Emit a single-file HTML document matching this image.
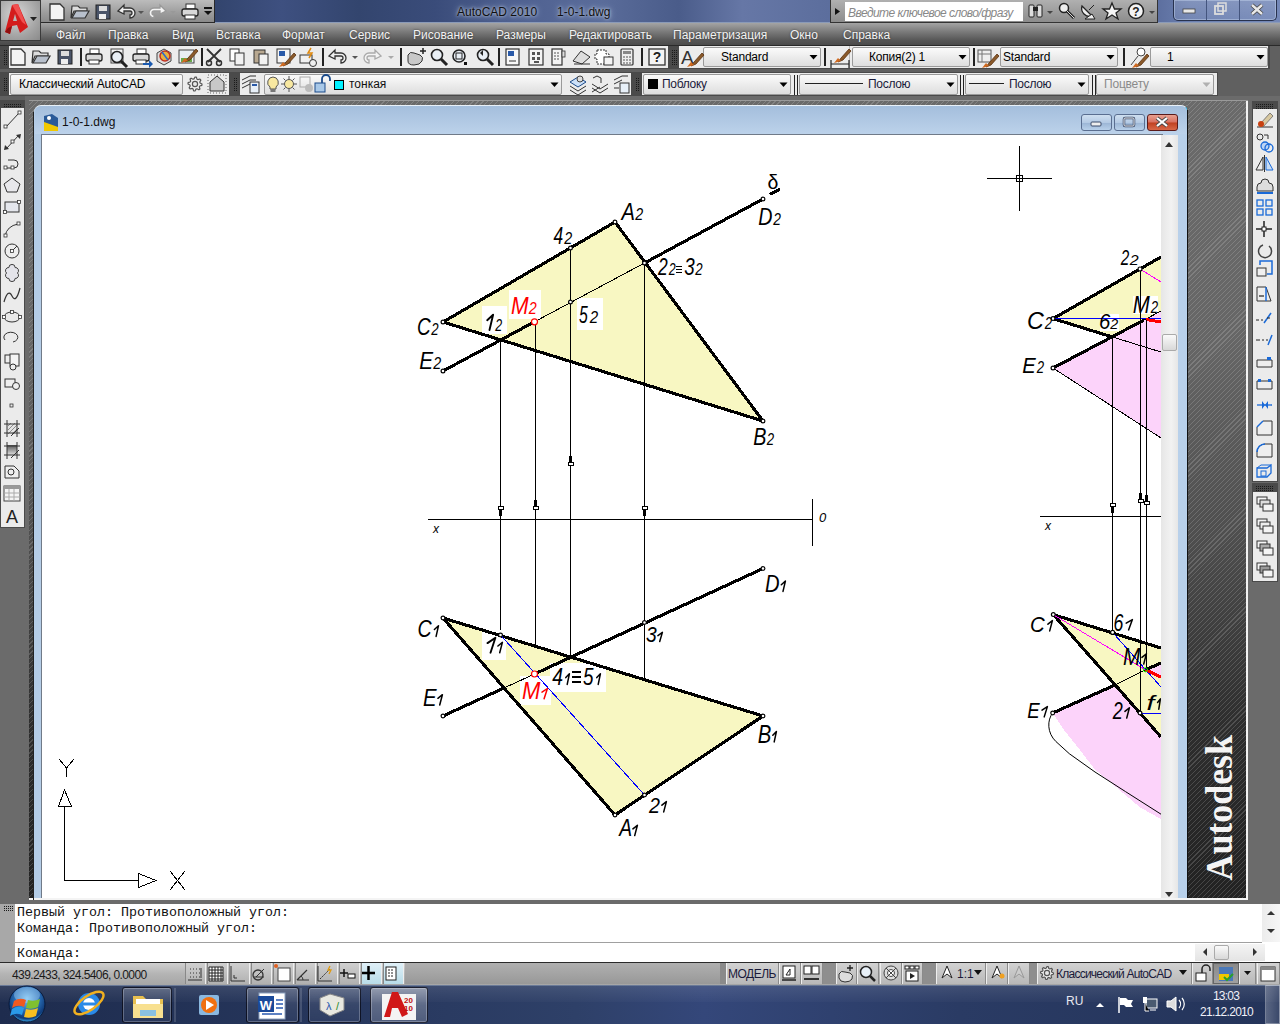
<!DOCTYPE html>
<html><head><meta charset="utf-8">
<style>
*{margin:0;padding:0;box-sizing:border-box}
html,body{width:1280px;height:1024px;overflow:hidden;background:#6b6b6b;font-family:"Liberation Sans",sans-serif}
.a{position:absolute}
.t{white-space:nowrap;line-height:1}
.mono{font-family:"Liberation Mono",monospace}
</style></head><body>
<div class="a" style="left:0px;top:0px;width:1280px;height:23px;background:linear-gradient(90deg,#34466f 0%,#33456e 17%,#3e5080 22%,#33456e 28%,#3a4c7a 34%,#4e6090 40%,#5a6c9a 47%,#4a5c8a 53%,#6677a6 58%,#5d6f9e 64%,#4a5c8c 80%,#5a6c9c 90%,#6c80b0 93%,#7488b8 100%)"></div>
<div class="a" style="left:0px;top:22px;width:1280px;height:1px;background:#8a9ab8"></div>
<div class="a t" style="left:457px;top:6px;font-size:12px;color:#101010;text-shadow:0 0 6px #b8c8e0,0 0 3px #c8d4e8">AutoCAD 2010&nbsp;&nbsp;&nbsp;&nbsp;&nbsp;&nbsp;1-0-1.dwg</div>
<div class="a" style="left:830px;top:0px;width:328px;height:23px;background:linear-gradient(#b0b0b0,#8c8c8c);border:1px solid #333;border-top:0"></div>
<div class="a" style="left:845px;top:2px;width:178px;height:19px;background:#fff"></div>
<div class="a t" style="left:848px;top:7px;font-size:12px;color:#888;font-style:italic;letter-spacing:-0.55px">Введите ключевое слово/фразу</div>
<div class="a" style="left:1173px;top:0px;width:104px;height:21px;background:linear-gradient(rgba(255,255,255,0.15),rgba(255,255,255,0.05));border:1px solid #28324e;border-top:0;border-radius:0 0 5px 5px;box-shadow:inset 0 0 0 1px rgba(200,215,240,0.45)"></div>
<div class="a" style="left:1206px;top:0px;width:1px;height:20px;background:#44557e"></div>
<div class="a" style="left:1239px;top:0px;width:1px;height:20px;background:#44557e"></div>
<div class="a" style="left:41px;top:0px;width:174px;height:23px;background:linear-gradient(#bcbcbc,#9c9c9c 60%,#8a8a8a);border-bottom:1px solid #2a2a2a;border-right:1px solid #2a2a2a"></div>
<div class="a" style="left:0px;top:23px;width:1280px;height:22px;background:linear-gradient(#a4a4a4,#7a7a7a 40%,#555 80%,#4a4a4a)"></div>
<div class="a t" style="left:56px;top:29px;font-size:12px;color:#f2f2f2;text-shadow:0 0 2px #333">Файл</div>
<div class="a t" style="left:108px;top:29px;font-size:12px;color:#f2f2f2;text-shadow:0 0 2px #333">Правка</div>
<div class="a t" style="left:172px;top:29px;font-size:12px;color:#f2f2f2;text-shadow:0 0 2px #333">Вид</div>
<div class="a t" style="left:216px;top:29px;font-size:12px;color:#f2f2f2;text-shadow:0 0 2px #333">Вставка</div>
<div class="a t" style="left:282px;top:29px;font-size:12px;color:#f2f2f2;text-shadow:0 0 2px #333">Формат</div>
<div class="a t" style="left:349px;top:29px;font-size:12px;color:#f2f2f2;text-shadow:0 0 2px #333">Сервис</div>
<div class="a t" style="left:413px;top:29px;font-size:12px;color:#f2f2f2;text-shadow:0 0 2px #333">Рисование</div>
<div class="a t" style="left:496px;top:29px;font-size:12px;color:#f2f2f2;text-shadow:0 0 2px #333">Размеры</div>
<div class="a t" style="left:569px;top:29px;font-size:12px;color:#f2f2f2;text-shadow:0 0 2px #333">Редактировать</div>
<div class="a t" style="left:673px;top:29px;font-size:12px;color:#f2f2f2;text-shadow:0 0 2px #333">Параметризация</div>
<div class="a t" style="left:790px;top:29px;font-size:12px;color:#f2f2f2;text-shadow:0 0 2px #333">Окно</div>
<div class="a t" style="left:843px;top:29px;font-size:12px;color:#f2f2f2;text-shadow:0 0 2px #333">Справка</div>
<div class="a" style="left:0px;top:0px;width:41px;height:41px;background:radial-gradient(circle at 40% 35%,#d8d8d8,#a6a6a6 60%,#8a8a8a);border:1px solid #3a3a3a"></div>
<div class="a" style="left:0px;top:45px;width:1280px;height:55px;background:#606060"></div>
<div class="a" style="left:0px;top:45px;width:1280px;height:1px;background:#2a2a2a"></div>
<div class="a" style="left:0px;top:46px;width:670px;height:23px;background:#4a4a4a"></div>
<div class="a" style="left:9px;top:46px;width:660px;height:22px;background:#ececec"></div>
<div class="a" style="left:668px;top:46px;width:602px;height:23px;background:#4a4a4a"></div>
<div class="a" style="left:679px;top:46px;width:589px;height:22px;background:#ececec"></div>
<div class="a" style="left:0px;top:72px;width:1218px;height:24px;background:#4a4a4a"></div>
<div class="a" style="left:9px;top:73px;width:1208px;height:22px;background:#ececec"></div>
<div class="a" style="left:703px;top:47px;width:118px;height:20px;background:linear-gradient(#fbfbfb,#ececec 50%,#dedede);border:1px solid #9a9a9a;border-radius:2px"></div>
<div class="a t" style="left:721px;top:51px;font-size:12px;color:#000;letter-spacing:-0.2px">Standard</div>
<div class="a" style="left:849px;top:46px;width:1px;height:22px;background:#bbb"></div>
<div class="a" style="left:852px;top:47px;width:118px;height:20px;background:linear-gradient(#fbfbfb,#ececec 50%,#dedede);border:1px solid #9a9a9a;border-radius:2px"></div>
<div class="a t" style="left:869px;top:51px;font-size:12px;color:#000;letter-spacing:-0.2px">Копия(2) 1</div>
<div class="a" style="left:1000px;top:47px;width:118px;height:20px;background:linear-gradient(#fbfbfb,#ececec 50%,#dedede);border:1px solid #9a9a9a;border-radius:2px"></div>
<div class="a t" style="left:1003px;top:51px;font-size:12px;color:#000;letter-spacing:-0.2px">Standard</div>
<div class="a" style="left:1150px;top:47px;width:118px;height:20px;background:linear-gradient(#fbfbfb,#ececec 50%,#dedede);border:1px solid #9a9a9a;border-radius:2px"></div>
<div class="a t" style="left:1167px;top:51px;font-size:12px;color:#000;letter-spacing:-0.2px">1</div>
<div class="a" style="left:10px;top:74px;width:173px;height:21px;background:linear-gradient(#fbfbfb,#ececec 50%,#dedede);border:1px solid #9a9a9a;border-radius:2px"></div>
<div class="a t" style="left:19px;top:78px;font-size:12px;color:#000;letter-spacing:-0.2px">Классический AutoCAD</div>
<div class="a" style="left:229px;top:72px;width:11px;height:24px;background:#4a4a4a"></div>
<div class="a" style="left:264px;top:74px;width:298px;height:21px;background:linear-gradient(#fbfbfb,#ececec 50%,#dedede);border:1px solid #9a9a9a;border-radius:2px"></div>
<div class="a" style="left:334px;top:80px;width:10px;height:10px;background:#00f0ff;border:1px solid #000"></div>
<div class="a t" style="left:349px;top:78px;font-size:12px;color:#111;">тонкая</div>
<div class="a" style="left:631px;top:72px;width:11px;height:24px;background:#4a4a4a"></div>
<div class="a" style="left:643px;top:74px;width:148px;height:21px;background:linear-gradient(#fbfbfb,#ececec 50%,#dedede);border:1px solid #9a9a9a;border-radius:2px"></div>
<div class="a" style="left:648px;top:79px;width:10px;height:10px;background:#000"></div>
<div class="a t" style="left:662px;top:78px;font-size:12px;color:#1a1a3a;letter-spacing:-0.3px">Поблоку</div>
<div class="a" style="left:799px;top:74px;width:159px;height:21px;background:linear-gradient(#fbfbfb,#ececec 50%,#dedede);border:1px solid #9a9a9a;border-radius:2px"></div>
<div class="a" style="left:805px;top:83px;width:58px;height:1px;background:#222"></div>
<div class="a t" style="left:868px;top:78px;font-size:12px;color:#1a1a3a;letter-spacing:-0.3px">Послою</div>
<div class="a" style="left:965px;top:74px;width:124px;height:21px;background:linear-gradient(#fbfbfb,#ececec 50%,#dedede);border:1px solid #9a9a9a;border-radius:2px"></div>
<div class="a" style="left:969px;top:83px;width:35px;height:1px;background:#222"></div>
<div class="a t" style="left:1009px;top:78px;font-size:12px;color:#1a1a3a;letter-spacing:-0.3px">Послою</div>
<div class="a" style="left:1096px;top:74px;width:118px;height:21px;background:linear-gradient(#fbfbfb,#ececec 50%,#dedede);border:1px solid #9a9a9a;border-radius:2px"></div>
<div class="a t" style="left:1104px;top:78px;font-size:12px;color:#8a8a8a;letter-spacing:-0.2px">Поцвету</div>
<!--MDI-->
<div class="a" style="left:25px;top:96px;width:1225px;height:4px;background:#6b6b6b"></div>
<div class="a" style="left:29px;top:100px;width:1219px;height:1px;background:#9a9a9a"></div>
<div class="a" style="left:29px;top:100px;width:1px;height:800px;background:#9a9a9a"></div>
<div class="a" style="left:29px;top:101px;width:1219px;height:799px;background:repeating-linear-gradient(-45deg,rgba(0,0,0,0) 0 2.7px,rgba(255,255,255,0.16) 2.7px 3.5px),linear-gradient(#6a6a6a,#666 30%,#4e4e4e 55%,#2e2e2e 78%,#222)"></div>
<div class="a" style="left:34px;top:105px;width:1154px;height:795px;background:linear-gradient(90deg,#b4cce6,#c4d8ee 50%,#b8d0ea);border-radius:7px 7px 0 0;border-right:1px solid #30c0f0;border-top:1px solid #e8f0f8"></div>
<div class="a" style="left:35px;top:106px;width:1152px;height:28px;background:linear-gradient(#a4bedc,#bcd2ea);border-radius:6px 6px 0 0"></div>
<div class="a t" style="left:62px;top:116px;font-size:12px;color:#111;">1-0-1.dwg</div>
<div class="a" style="left:1081px;top:114px;width:31px;height:17px;background:linear-gradient(#cfdff0 0%,#b4cae4 50%,#9ab4d4 51%,#b8d0ea);border:1px solid #5a6e90;border-radius:3px"></div>
<div class="a" style="left:1114px;top:114px;width:31px;height:17px;background:linear-gradient(#cfdff0 0%,#b4cae4 50%,#9ab4d4 51%,#b8d0ea);border:1px solid #5a6e90;border-radius:3px"></div>
<div class="a" style="left:1147px;top:114px;width:31px;height:17px;background:linear-gradient(#e8a090 0%,#d87060 48%,#c04020 52%,#d86848);border:1px solid #5a1a1a;border-radius:3px"></div>
<div class="a" style="left:41px;top:134px;width:1122px;height:1px;background:#707a88"></div>
<div class="a" style="left:41px;top:134px;width:1px;height:765px;background:#707a88"></div>
<div class="a" style="left:1161px;top:135px;width:17px;height:763px;background:linear-gradient(90deg,#e6e6e6,#f2f2f2 60%,#e6e6e6)"></div>
<div class="a" style="left:1162px;top:334px;width:15px;height:17px;background:linear-gradient(#fafafa,#d8d8d8);border:1px solid #aaa;border-radius:2px"></div>
<div class="a" style="left:29px;top:898px;width:1220px;height:2px;background:#f4f4f4"></div>
<div class="a" style="left:1187px;top:101px;width:59px;height:797px;background:repeating-linear-gradient(-45deg,rgba(0,0,0,0) 0 2.7px,rgba(255,255,255,0.16) 2.7px 3.5px),linear-gradient(#6a6a6a,#666 30%,#4e4e4e 55%,#2e2e2e 78%,#222)"></div>
<div class="a" style="left:1187px;top:110px;width:1px;height:788px;background:#111"></div>
<div class="a" style="left:33px;top:112px;width:1px;height:788px;background:#222"></div>
<div class="a" style="left:1246px;top:101px;width:2px;height:799px;background:#f2f2f2"></div>
<div class="a" style="left:1187px;top:898px;width:61px;height:2px;background:#f4f4f4"></div>
<div class="a" style="left:1248px;top:96px;width:32px;height:804px;background:#6b6b6b"></div>
<div class="a" style="left:0px;top:100px;width:25px;height:428px;background:#4a4a4a"></div>
<div class="a" style="left:1px;top:108px;width:23px;height:419px;background:#ebebeb"></div>
<div class="a" style="left:1252px;top:101px;width:26px;height:381px;background:#4a4a4a"></div>
<div class="a" style="left:1253px;top:109px;width:24px;height:372px;background:#ebebeb"></div>
<div class="a" style="left:1252px;top:483px;width:26px;height:99px;background:#4a4a4a"></div>
<div class="a" style="left:1253px;top:492px;width:24px;height:89px;background:#ebebeb"></div>
<div class="a" style="left:0px;top:900px;width:1280px;height:4px;background:#6b6b6b"></div>
<div class="a" style="left:0px;top:904px;width:15px;height:58px;background:#a8a8a8"></div>
<div class="a" style="left:15px;top:904px;width:1265px;height:58px;background:#fff"></div>
<div class="a mono" style="left:17px;top:905px;font-size:13.33px;line-height:16px;color:#111;white-space:pre">Первый угол: Противоположный угол:
Команда: Противоположный угол:</div>
<div class="a" style="left:15px;top:942px;width:1247px;height:1px;background:#a0a0a0"></div>
<div class="a mono" style="left:17px;top:946px;font-size:13.33px;line-height:16px;color:#111;white-space:pre">Команда:</div>
<div class="a" style="left:1262px;top:904px;width:18px;height:38px;background:linear-gradient(90deg,#ececec,#f6f6f6)"></div>
<div class="a" style="left:1195px;top:944px;width:70px;height:17px;background:linear-gradient(#f4f4f4,#e4e4e4)"></div>
<div class="a" style="left:1214px;top:945px;width:15px;height:15px;background:linear-gradient(#fafafa,#d8d8d8);border:1px solid #aaa;border-radius:2px"></div>
<div class="a" style="left:0px;top:962px;width:1280px;height:23px;background:linear-gradient(#cfcfcf,#b4b4b4 50%,#a6a6a6);border-top:1px solid #2a2a2a"></div>
<div class="a t" style="left:12px;top:969px;font-size:12px;color:#1a1a1a;letter-spacing:-0.6px">439.2433, 324.5406, 0.0000</div>
<div class="a" style="left:185px;top:963px;width:21px;height:21px;background:linear-gradient(#d0d0d0,#b0b0b0);border-left:1px solid #888;border-right:1px solid #eee"></div>
<div class="a" style="left:207px;top:963px;width:21px;height:21px;background:linear-gradient(#d0d0d0,#b0b0b0);border-left:1px solid #888;border-right:1px solid #eee"></div>
<div class="a" style="left:229px;top:963px;width:21px;height:21px;background:linear-gradient(#d0d0d0,#b0b0b0);border-left:1px solid #888;border-right:1px solid #eee"></div>
<div class="a" style="left:251px;top:963px;width:21px;height:21px;background:linear-gradient(#d0d0d0,#b0b0b0);border-left:1px solid #888;border-right:1px solid #eee"></div>
<div class="a" style="left:273px;top:963px;width:21px;height:21px;background:linear-gradient(#d0d0d0,#b0b0b0);border-left:1px solid #888;border-right:1px solid #eee"></div>
<div class="a" style="left:295px;top:963px;width:21px;height:21px;background:linear-gradient(#d0d0d0,#b0b0b0);border-left:1px solid #888;border-right:1px solid #eee"></div>
<div class="a" style="left:317px;top:963px;width:21px;height:21px;background:linear-gradient(#d0d0d0,#b0b0b0);border-left:1px solid #888;border-right:1px solid #eee"></div>
<div class="a" style="left:339px;top:963px;width:21px;height:21px;background:linear-gradient(#d0d0d0,#b0b0b0);border-left:1px solid #888;border-right:1px solid #eee"></div>
<div class="a" style="left:361px;top:963px;width:21px;height:21px;background:linear-gradient(#e0f0f8,#b8dce8);border-left:1px solid #888;border-right:1px solid #eee"></div>
<div class="a" style="left:383px;top:963px;width:21px;height:21px;background:linear-gradient(#e0f0f8,#b8dce8);border-left:1px solid #888;border-right:1px solid #eee"></div>
<div class="a" style="left:405px;top:963px;width:315px;height:21px;background:linear-gradient(#b0b0b0,#989898)"></div>
<div class="a" style="left:720px;top:963px;width:6px;height:21px;background:#8a8a8a"></div>
<div class="a" style="left:726px;top:963px;width:53px;height:21px;background:linear-gradient(#d2d2d2,#b8b8b8);border-left:1px solid #eee;border-right:1px solid #8a8a8a"></div>
<div class="a" style="left:779px;top:963px;width:22px;height:21px;background:linear-gradient(#d2d2d2,#b8b8b8);border-left:1px solid #eee;border-right:1px solid #8a8a8a"></div>
<div class="a" style="left:801px;top:963px;width:22px;height:21px;background:linear-gradient(#d2d2d2,#b8b8b8);border-left:1px solid #eee;border-right:1px solid #8a8a8a"></div>
<div class="a" style="left:836px;top:963px;width:21px;height:21px;background:linear-gradient(#d2d2d2,#b8b8b8);border-left:1px solid #eee;border-right:1px solid #8a8a8a"></div>
<div class="a" style="left:857px;top:963px;width:22px;height:21px;background:linear-gradient(#d2d2d2,#b8b8b8);border-left:1px solid #eee;border-right:1px solid #8a8a8a"></div>
<div class="a" style="left:880px;top:963px;width:22px;height:21px;background:linear-gradient(#d2d2d2,#b8b8b8);border-left:1px solid #eee;border-right:1px solid #8a8a8a"></div>
<div class="a" style="left:902px;top:963px;width:21px;height:21px;background:linear-gradient(#d2d2d2,#b8b8b8);border-left:1px solid #eee;border-right:1px solid #8a8a8a"></div>
<div class="a" style="left:936px;top:963px;width:50px;height:21px;background:linear-gradient(#d2d2d2,#b8b8b8);border-left:1px solid #eee;border-right:1px solid #8a8a8a"></div>
<div class="a" style="left:986px;top:963px;width:22px;height:21px;background:linear-gradient(#d2d2d2,#b8b8b8);border-left:1px solid #eee;border-right:1px solid #8a8a8a"></div>
<div class="a" style="left:1008px;top:963px;width:22px;height:21px;background:linear-gradient(#d2d2d2,#b8b8b8);border-left:1px solid #eee;border-right:1px solid #8a8a8a"></div>
<div class="a" style="left:1037px;top:963px;width:155px;height:21px;background:linear-gradient(#d2d2d2,#b8b8b8);border-left:1px solid #eee;border-right:1px solid #8a8a8a"></div>
<div class="a" style="left:1192px;top:963px;width:21px;height:21px;background:linear-gradient(#d2d2d2,#b8b8b8);border-left:1px solid #eee;border-right:1px solid #8a8a8a"></div>
<div class="a" style="left:1239px;top:963px;width:17px;height:21px;background:linear-gradient(#d2d2d2,#b8b8b8);border-left:1px solid #eee;border-right:1px solid #8a8a8a"></div>
<div class="a" style="left:1257px;top:963px;width:23px;height:21px;background:linear-gradient(#d2d2d2,#b8b8b8);border-left:1px solid #eee;border-right:1px solid #8a8a8a"></div>
<div class="a" style="left:823px;top:963px;width:13px;height:21px;background:#8e8e8e"></div>
<div class="a" style="left:923px;top:963px;width:13px;height:21px;background:#8e8e8e"></div>
<div class="a" style="left:1030px;top:963px;width:7px;height:21px;background:#8e8e8e"></div>
<div class="a" style="left:1213px;top:963px;width:26px;height:21px;background:linear-gradient(#8a8a8a,#a0a0a0);border:1px solid #666"></div>
<div class="a t" style="left:728px;top:968px;font-size:12px;color:#1a1a3a;letter-spacing:-0.5px">МОДЕЛЬ</div>
<div class="a t" style="left:957px;top:968px;font-size:12px;color:#1a1a3a;">1:1</div>
<div class="a t" style="left:1056px;top:968px;font-size:12px;color:#1a1a3a;letter-spacing:-0.75px">Классический AutoCAD</div>
<div class="a" style="left:0px;top:985px;width:1280px;height:39px;background:linear-gradient(90deg,#1e2c4e 0%,#26365c 25%,#2e4068 45%,#34477a 55%,#2a3b64 75%,#24345a 100%)"></div>
<div class="a" style="left:0px;top:985px;width:1280px;height:1px;background:#6a7a98"></div>
<div class="a" style="left:0px;top:986px;width:1280px;height:16px;background:linear-gradient(rgba(255,255,255,0.10),rgba(255,255,255,0.02))"></div>
<div class="a" style="left:122px;top:987px;width:50px;height:36px;background:linear-gradient(rgba(255,255,255,0.22),rgba(255,255,255,0.08) 50%,rgba(255,255,255,0.04));border:1px solid rgba(0,0,10,0.7);border-radius:3px;box-shadow:inset 0 0 0 1px rgba(255,255,255,0.25)"></div>
<div class="a" style="left:246px;top:987px;width:53px;height:36px;background:linear-gradient(rgba(255,255,255,0.22),rgba(255,255,255,0.08) 50%,rgba(255,255,255,0.04));border:1px solid rgba(0,0,10,0.7);border-radius:3px;box-shadow:inset 0 0 0 1px rgba(255,255,255,0.25)"></div>
<div class="a" style="left:308px;top:987px;width:53px;height:36px;background:linear-gradient(rgba(255,255,255,0.22),rgba(255,255,255,0.08) 50%,rgba(255,255,255,0.04));border:1px solid rgba(0,0,10,0.7);border-radius:3px;box-shadow:inset 0 0 0 1px rgba(255,255,255,0.25)"></div>
<div class="a" style="left:370px;top:987px;width:58px;height:36px;background:linear-gradient(rgba(255,255,255,0.45),rgba(255,255,255,0.25) 50%,rgba(255,255,255,0.18));border:1px solid rgba(0,0,10,0.7);border-radius:3px;box-shadow:inset 0 0 0 1px rgba(255,255,255,0.25)"></div>
<div class="a" style="left:174px;top:988px;width:2px;height:34px;background:rgba(255,255,255,0.15)"></div>
<div class="a" style="left:300px;top:988px;width:2px;height:34px;background:rgba(255,255,255,0.15)"></div>
<div class="a t" style="left:1066px;top:995px;font-size:12px;color:#e8e8f0;">RU</div>
<div class="a t" style="left:1213px;top:990px;font-size:12px;color:#f0f0f8;letter-spacing:-0.8px">13:03</div>
<div class="a t" style="left:1200px;top:1006px;font-size:12px;color:#f0f0f8;letter-spacing:-0.7px">21.12.2010</div>
<div class="a" style="left:1265px;top:985px;width:15px;height:39px;background:linear-gradient(90deg,rgba(255,255,255,0.25),rgba(255,255,255,0.1));border:1px solid rgba(255,255,255,0.3)"></div>
<div class="a" style="left:42px;top:135px;width:1119px;height:763px;background:#fff;overflow:hidden">
<svg class="a" style="left:-42px;top:-135px" width="1280" height="1024" shape-rendering="crispEdges" font-family="Liberation Sans">
<polygon points="615,222 763,421 443,322" fill="#f8f7c2" />
<rect x="482" y="306" width="25" height="28" fill="#fff"/>
<rect x="509" y="290" width="32" height="29" fill="#fff"/>
<rect x="577" y="298" width="26" height="32" fill="#fff"/>
<line x1="443" y1="322" x2="615" y2="222" stroke="#000" stroke-width="3.1" />
<line x1="615" y1="222" x2="763" y2="421" stroke="#000" stroke-width="3.1" />
<line x1="763" y1="421" x2="443" y2="322" stroke="#000" stroke-width="3.1" />
<line x1="443" y1="371" x2="534.5" y2="321.8" stroke="#000" stroke-width="3.1" />
<line x1="534.5" y1="321.8" x2="644.5" y2="263" stroke="#000" stroke-width="1" />
<line x1="644.5" y1="263" x2="763" y2="199" stroke="#000" stroke-width="3.1" />
<line x1="500.5" y1="340" x2="500.5" y2="635" stroke="#000" stroke-width="1" />
<line x1="535.5" y1="322" x2="535.5" y2="673" stroke="#000" stroke-width="1" />
<line x1="570.5" y1="248" x2="570.5" y2="657" stroke="#000" stroke-width="1" />
<line x1="644.5" y1="263" x2="644.5" y2="795" stroke="#000" stroke-width="1" />
<circle cx="615" cy="222" r="1.9" stroke="#000" stroke-width="1.2" fill="#fff" shape-rendering="auto"/>
<circle cx="763" cy="421" r="1.9" stroke="#000" stroke-width="1.2" fill="#fff" shape-rendering="auto"/>
<circle cx="443" cy="322" r="1.9" stroke="#000" stroke-width="1.2" fill="#fff" shape-rendering="auto"/>
<circle cx="763" cy="199" r="1.9" stroke="#000" stroke-width="1.2" fill="#fff" shape-rendering="auto"/>
<circle cx="443" cy="371" r="1.9" stroke="#000" stroke-width="1.2" fill="#fff" shape-rendering="auto"/>
<circle cx="570.5" cy="248" r="1.9" stroke="#000" stroke-width="1.2" fill="#fff" shape-rendering="auto"/>
<circle cx="570.5" cy="302" r="1.9" stroke="#000" stroke-width="1.2" fill="#fff" shape-rendering="auto"/>
<circle cx="644.5" cy="263" r="1.9" stroke="#000" stroke-width="1.2" fill="#fff" shape-rendering="auto"/>
<circle cx="534.5" cy="321.8" r="3" stroke="#f00" stroke-width="1.2" fill="#fff" shape-rendering="auto"/>
<line x1="770" y1="194.5" x2="780" y2="189" stroke="#000" stroke-width="3.1" />
<text x="767.5" y="188.5" font-size="19.5" fill="#000">δ</text>
<rect x="498.0" y="506.5" width="5" height="3" fill="#fff" stroke="#000" stroke-width="1"/><rect x="499.0" y="510" width="3" height="6" fill="#000"/>
<rect x="533.0" y="506.5" width="5" height="3" fill="#fff" stroke="#000" stroke-width="1"/><rect x="534.0" y="500" width="3" height="6" fill="#000"/>
<rect x="568.0" y="462.5" width="5" height="3" fill="#fff" stroke="#000" stroke-width="1"/><rect x="569.0" y="456" width="3" height="6" fill="#000"/>
<rect x="642.0" y="506.5" width="5" height="3" fill="#fff" stroke="#000" stroke-width="1"/><rect x="643.0" y="510" width="3" height="6" fill="#000"/>
<line x1="428" y1="519.5" x2="812" y2="519.5" stroke="#000" stroke-width="1" />
<line x1="812.5" y1="499" x2="812.5" y2="546" stroke="#000" stroke-width="1" />
<text x="819" y="522" font-size="13" fill="#000" font-style="italic">0</text>
<text x="433" y="533" font-size="12" fill="#000" font-style="italic">x</text>
<polygon points="615,815 763,716 443,618" fill="#f8f7c2" />
<rect x="482" y="630" width="24" height="30" fill="#fff"/>
<rect x="550" y="663" width="56" height="29" fill="#fff"/>
<rect x="520" y="676" width="31" height="29" fill="#fff"/>
<line x1="443" y1="618" x2="615" y2="815" stroke="#000" stroke-width="3.1" />
<line x1="615" y1="815" x2="763" y2="716" stroke="#000" stroke-width="3.1" />
<line x1="763" y1="716" x2="443" y2="618" stroke="#000" stroke-width="3.1" />
<line x1="443" y1="716" x2="504" y2="688" stroke="#000" stroke-width="3.1" />
<line x1="504" y1="688" x2="534.5" y2="674" stroke="#000" stroke-width="1" />
<line x1="534.5" y1="674" x2="763" y2="568.5" stroke="#000" stroke-width="3.1" />
<line x1="500.5" y1="635" x2="644.5" y2="795" stroke="#0000ff" stroke-width="1" />
<circle cx="615" cy="815" r="1.9" stroke="#000" stroke-width="1.2" fill="#fff" shape-rendering="auto"/>
<circle cx="763" cy="716" r="1.9" stroke="#000" stroke-width="1.2" fill="#fff" shape-rendering="auto"/>
<circle cx="443" cy="618" r="1.9" stroke="#000" stroke-width="1.2" fill="#fff" shape-rendering="auto"/>
<circle cx="763" cy="568.5" r="1.9" stroke="#000" stroke-width="1.2" fill="#fff" shape-rendering="auto"/>
<circle cx="443" cy="716" r="1.9" stroke="#000" stroke-width="1.2" fill="#fff" shape-rendering="auto"/>
<circle cx="500.5" cy="635" r="1.9" stroke="#000" stroke-width="1.2" fill="#fff" shape-rendering="auto"/>
<circle cx="644.5" cy="622.5" r="1.9" stroke="#000" stroke-width="1.2" fill="#fff" shape-rendering="auto"/>
<circle cx="644.5" cy="795" r="1.9" stroke="#000" stroke-width="1.2" fill="#fff" shape-rendering="auto"/>
<circle cx="534.5" cy="674" r="3" stroke="#f00" stroke-width="1.2" fill="#fff" shape-rendering="auto"/>
<polygon points="1053,318.6 1161,257 1161,311 1144,320 1112.5,337" fill="#f8f7c2" />
<polygon points="1053,368 1112.5,337 1144,320 1161,311 1161,438" fill="#fcd3fa" />
<rect x="1100" y="314" width="19" height="17" fill="#fff"/>
<rect x="1133" y="296" width="25" height="18" fill="#fff"/>
<line x1="1053" y1="318.6" x2="1161" y2="257" stroke="#000" stroke-width="3.1" />
<line x1="1053" y1="318.6" x2="1112.5" y2="337" stroke="#000" stroke-width="3.1" />
<line x1="1112.5" y1="337" x2="1161" y2="352" stroke="#000" stroke-width="1" />
<line x1="1053" y1="368" x2="1144" y2="320" stroke="#000" stroke-width="3.1" />
<line x1="1144" y1="320" x2="1161" y2="311" stroke="#000" stroke-width="1" />
<line x1="1053" y1="368" x2="1161" y2="438" stroke="#000" stroke-width="1" />
<line x1="1053" y1="318.6" x2="1161" y2="318.6" stroke="#0000ff" stroke-width="1" />
<line x1="1146" y1="319.5" x2="1161" y2="322" stroke="#f00" stroke-width="3.1" />
<line x1="1140" y1="269" x2="1161" y2="282" stroke="#f0f" stroke-width="1" />
<line x1="1112.5" y1="337" x2="1112.5" y2="632" stroke="#000" stroke-width="1" />
<line x1="1140.5" y1="269" x2="1140.5" y2="713" stroke="#000" stroke-width="1" />
<line x1="1146.5" y1="320" x2="1146.5" y2="670" stroke="#000" stroke-width="1" />
<circle cx="1053" cy="318.6" r="1.9" stroke="#000" stroke-width="1.2" fill="#fff" shape-rendering="auto"/>
<circle cx="1053" cy="368" r="1.9" stroke="#000" stroke-width="1.2" fill="#fff" shape-rendering="auto"/>
<circle cx="1140" cy="269" r="2" stroke="#000" stroke-width="1.2" fill="#fff" shape-rendering="auto"/>
<rect x="1110.0" y="503.5" width="5" height="3" fill="#fff" stroke="#000" stroke-width="1"/><rect x="1111.0" y="507" width="3" height="6" fill="#000"/>
<rect x="1138.0" y="499.5" width="5" height="3" fill="#fff" stroke="#000" stroke-width="1"/><rect x="1139.0" y="493" width="3" height="6" fill="#000"/>
<rect x="1144.0" y="501.5" width="5" height="3" fill="#fff" stroke="#000" stroke-width="1"/><rect x="1145.0" y="495" width="3" height="6" fill="#000"/>
<line x1="1040" y1="516.5" x2="1161" y2="516.5" stroke="#000" stroke-width="1" />
<text x="1045" y="530" font-size="12" fill="#000" font-style="italic">x</text>
<polygon points="1053.3,614.6 1161,648 1161,737" fill="#f8f7c2" />
<polygon points="1052.7,713 1115,685 1161,737 1161,819 1140,807.4 1108.4,780.6 1095,769.6 1079,748.8 1064.4,730.5 1054.7,715.9" fill="#fcd3fa" />
<polygon points="1145.4,669.8 1161,663 1161,677" fill="#fcd3fa" />
<line x1="1053.3" y1="614.6" x2="1161" y2="648" stroke="#000" stroke-width="3.1" />
<line x1="1053.3" y1="614.6" x2="1161" y2="737" stroke="#000" stroke-width="3.1" />
<line x1="1052.7" y1="713" x2="1115" y2="685" stroke="#000" stroke-width="3.1" />
<line x1="1115" y1="685" x2="1145.4" y2="669.8" stroke="#000" stroke-width="1" />
<line x1="1145.4" y1="669.8" x2="1161" y2="663" stroke="#000" stroke-width="3.1" />
<line x1="1053.3" y1="614.6" x2="1145.4" y2="669.8" stroke="#f0f" stroke-width="1" />
<line x1="1112.6" y1="632.4" x2="1161" y2="687" stroke="#0000ff" stroke-width="1" />
<line x1="1140" y1="713" x2="1161" y2="713" stroke="#0000ff" stroke-width="1" />
<line x1="1145.4" y1="669.8" x2="1161" y2="677" stroke="#f00" stroke-width="3.1" />
<line x1="1112.5" y1="600" x2="1112.5" y2="632" stroke="#000" stroke-width="1" />
<line x1="1140.5" y1="600" x2="1140.5" y2="713" stroke="#000" stroke-width="1" />
<line x1="1146.5" y1="600" x2="1146.5" y2="670" stroke="#000" stroke-width="1" />
<circle cx="1145.4" cy="669.8" r="2" fill="none" stroke="#0f0" stroke-width="1" shape-rendering="auto"/>
<path d="M1052.8,712.8 C1047,720 1047,733 1055.9,741.5 L1069.3,753.7 L1095,772 L1125.5,791.6 L1161,814.2" fill="none" stroke="#000" stroke-width="1" shape-rendering="auto"/>
<circle cx="1053.3" cy="614.6" r="1.9" stroke="#000" stroke-width="1.2" fill="#fff" shape-rendering="auto"/>
<circle cx="1052.7" cy="713" r="1.9" stroke="#000" stroke-width="1.2" fill="#fff" shape-rendering="auto"/>
<circle cx="1140" cy="713" r="1.9" stroke="#000" stroke-width="1.2" fill="#fff" shape-rendering="auto"/>
<circle cx="1112.6" cy="632.4" r="2" stroke="#000" stroke-width="1.2" fill="#fff" shape-rendering="auto"/>
<text x="621.40" y="219.62" font-size="24.14" fill="#000" font-style="italic" textLength="13.42" lengthAdjust="spacingAndGlyphs">A</text>
<text x="635.14" y="219.62" font-size="16.15" fill="#000" font-style="italic" textLength="7.94" lengthAdjust="spacingAndGlyphs">2</text>
<text x="553.52" y="243.94" font-size="24.12" fill="#000" font-style="italic" textLength="9.69" lengthAdjust="spacingAndGlyphs">4</text>
<text x="564.20" y="244.00" font-size="16.67" fill="#000" font-style="italic" textLength="7.94" lengthAdjust="spacingAndGlyphs">2</text>
<text x="658.08" y="274.56" font-size="23.72" fill="#000" font-style="italic" textLength="9.73" lengthAdjust="spacingAndGlyphs">2</text>
<text x="668.70" y="274.56" font-size="17.25" fill="#000" font-style="italic" textLength="6.90" lengthAdjust="spacingAndGlyphs">2</text>
<text x="684.32" y="275.00" font-size="23.61" fill="#000" font-style="italic" textLength="10.43" lengthAdjust="spacingAndGlyphs">3</text>
<text x="695.20" y="274.56" font-size="17.25" fill="#000" font-style="italic" textLength="7.35" lengthAdjust="spacingAndGlyphs">2</text>
<text x="417.00" y="335.38" font-size="24.69" fill="#000" font-style="italic" textLength="13.65" lengthAdjust="spacingAndGlyphs">C</text>
<text x="431.20" y="335.00" font-size="17.32" fill="#000" font-style="italic" textLength="7.35" lengthAdjust="spacingAndGlyphs">2</text>
<text x="511.00" y="313.62" font-size="23.09" fill="#f00" font-style="italic" textLength="17.61" lengthAdjust="spacingAndGlyphs">M</text>
<text x="528.70" y="314.00" font-size="16.67" fill="#f00" font-style="italic" textLength="7.94" lengthAdjust="spacingAndGlyphs">2</text>
<path d="M487.2,320.2 L493.1,314.7 L489.5,330.0" fill="none" stroke="#000" stroke-width="1.9" stroke-linecap="round" stroke-linejoin="round" shape-rendering="auto"/>
<text x="495.20" y="330.88" font-size="16.69" fill="#000" font-style="italic" textLength="6.90" lengthAdjust="spacingAndGlyphs">2</text>
<text x="579.00" y="322.50" font-size="23.74" fill="#000" font-style="italic" textLength="8.78" lengthAdjust="spacingAndGlyphs">5</text>
<text x="589.70" y="322.50" font-size="16.15" fill="#000" font-style="italic" textLength="8.40" lengthAdjust="spacingAndGlyphs">2</text>
<text x="419.20" y="369.00" font-size="24.14" fill="#000" font-style="italic" textLength="13.81" lengthAdjust="spacingAndGlyphs">E</text>
<text x="433.20" y="369.00" font-size="16.67" fill="#000" font-style="italic" textLength="7.94" lengthAdjust="spacingAndGlyphs">2</text>
<text x="758.20" y="224.94" font-size="24.12" fill="#000" font-style="italic" textLength="14.21" lengthAdjust="spacingAndGlyphs">D</text>
<text x="773.26" y="224.94" font-size="15.64" fill="#000" font-style="italic" textLength="7.69" lengthAdjust="spacingAndGlyphs">2</text>
<text x="753.20" y="444.94" font-size="23.72" fill="#000" font-style="italic" textLength="13.16" lengthAdjust="spacingAndGlyphs">B</text>
<text x="766.70" y="444.88" font-size="16.69" fill="#000" font-style="italic" textLength="7.35" lengthAdjust="spacingAndGlyphs">2</text>
<text x="417.38" y="637.00" font-size="24.14" fill="#000" font-style="italic" textLength="14.14" lengthAdjust="spacingAndGlyphs">C</text>
<path d="M434.4,629.5 L438.5,625.7 L436.1,636.4" fill="none" stroke="#000" stroke-width="1.5" stroke-linecap="round" stroke-linejoin="round" shape-rendering="auto"/>
<path d="M487.5,643.1 L495.4,637.7 L490.5,652.7" fill="none" stroke="#000" stroke-width="1.9" stroke-linecap="round" stroke-linejoin="round" shape-rendering="auto"/>
<path d="M497.9,646.0 L502.4,642.4 L499.7,652.7" fill="none" stroke="#000" stroke-width="1.5" stroke-linecap="round" stroke-linejoin="round" shape-rendering="auto"/>
<text x="552.20" y="685.00" font-size="24.14" fill="#000" font-style="italic" textLength="10.79" lengthAdjust="spacingAndGlyphs">4</text>
<path d="M565.8,677.6 L569.4,673.8 L567.2,684.4" fill="none" stroke="#000" stroke-width="1.5" stroke-linecap="round" stroke-linejoin="round" shape-rendering="auto"/>
<text x="583.00" y="685.00" font-size="24.14" fill="#000" font-style="italic" textLength="10.50" lengthAdjust="spacingAndGlyphs">5</text>
<path d="M596.8,677.6 L600.4,673.8 L598.2,684.4" fill="none" stroke="#000" stroke-width="1.5" stroke-linecap="round" stroke-linejoin="round" shape-rendering="auto"/>
<text x="522.00" y="699.12" font-size="24.79" fill="#f00" font-style="italic" textLength="18.40" lengthAdjust="spacingAndGlyphs">M</text>
<path d="M542.0,692.1 L547.4,688.5 L544.1,698.8" fill="none" stroke="#f00" stroke-width="1.5" stroke-linecap="round" stroke-linejoin="round" shape-rendering="auto"/>
<text x="423.00" y="705.88" font-size="23.57" fill="#000" font-style="italic" textLength="13.57" lengthAdjust="spacingAndGlyphs">E</text>
<path d="M437.9,698.3 L442.4,694.7 L439.7,705.0" fill="none" stroke="#000" stroke-width="1.5" stroke-linecap="round" stroke-linejoin="round" shape-rendering="auto"/>
<text x="764.88" y="592.00" font-size="23.61" fill="#000" font-style="italic" textLength="14.55" lengthAdjust="spacingAndGlyphs">D</text>
<path d="M781.3,584.7 L785.4,581.1 L783.0,591.4" fill="none" stroke="#000" stroke-width="1.5" stroke-linecap="round" stroke-linejoin="round" shape-rendering="auto"/>
<text x="646.00" y="642.38" font-size="21.32" fill="#000" font-style="italic" textLength="10.71" lengthAdjust="spacingAndGlyphs">3</text>
<path d="M657.9,635.6 L662.4,632.4 L659.7,641.5" fill="none" stroke="#000" stroke-width="1.5" stroke-linecap="round" stroke-linejoin="round" shape-rendering="auto"/>
<text x="757.82" y="742.50" font-size="25.42" fill="#000" font-style="italic" textLength="13.57" lengthAdjust="spacingAndGlyphs">B</text>
<path d="M772.8,735.2 L776.4,731.6 L774.2,741.9" fill="none" stroke="#000" stroke-width="1.5" stroke-linecap="round" stroke-linejoin="round" shape-rendering="auto"/>
<text x="648.96" y="812.50" font-size="21.65" fill="#000" font-style="italic" textLength="10.96" lengthAdjust="spacingAndGlyphs">2</text>
<path d="M661.9,805.2 L666.4,801.6 L663.7,811.9" fill="none" stroke="#000" stroke-width="1.5" stroke-linecap="round" stroke-linejoin="round" shape-rendering="auto"/>
<text x="619.22" y="836.06" font-size="23.46" fill="#000" font-style="italic" textLength="12.83" lengthAdjust="spacingAndGlyphs">A</text>
<path d="M632.9,828.9 L637.4,825.3 L634.7,835.6" fill="none" stroke="#000" stroke-width="1.5" stroke-linecap="round" stroke-linejoin="round" shape-rendering="auto"/>
<text x="1120.64" y="264.88" font-size="22.92" fill="#000" font-style="italic" textLength="8.51" lengthAdjust="spacingAndGlyphs">2</text>
<text x="1129.70" y="264.88" font-size="15.30" fill="#000" font-style="italic" textLength="8.91" lengthAdjust="spacingAndGlyphs">2</text>
<text x="1027.00" y="328.50" font-size="23.04" fill="#000" font-style="italic" textLength="16.80" lengthAdjust="spacingAndGlyphs">C</text>
<text x="1044.70" y="328.50" font-size="16.15" fill="#000" font-style="italic" textLength="7.35" lengthAdjust="spacingAndGlyphs">2</text>
<text x="1099.00" y="329.00" font-size="21.65" fill="#000" font-style="italic" textLength="11.32" lengthAdjust="spacingAndGlyphs">6</text>
<text x="1110.20" y="329.00" font-size="15.51" fill="#000" font-style="italic" textLength="7.94" lengthAdjust="spacingAndGlyphs">2</text>
<text x="1132.82" y="312.50" font-size="23.04" fill="#000" font-style="italic" textLength="17.02" lengthAdjust="spacingAndGlyphs">M</text>
<text x="1150.70" y="312.50" font-size="16.15" fill="#000" font-style="italic" textLength="7.35" lengthAdjust="spacingAndGlyphs">2</text>
<text x="1022.20" y="372.94" font-size="22.51" fill="#000" font-style="italic" textLength="13.49" lengthAdjust="spacingAndGlyphs">E</text>
<text x="1036.70" y="372.94" font-size="15.64" fill="#000" font-style="italic" textLength="7.35" lengthAdjust="spacingAndGlyphs">2</text>
<text x="1030.00" y="631.50" font-size="22.38" fill="#000" font-style="italic" textLength="14.70" lengthAdjust="spacingAndGlyphs">C</text>
<path d="M1047.9,624.2 L1052.4,620.6 L1049.7,630.9" fill="none" stroke="#000" stroke-width="1.5" stroke-linecap="round" stroke-linejoin="round" shape-rendering="auto"/>
<text x="1113.62" y="630.50" font-size="23.85" fill="#000" font-style="italic" textLength="9.85" lengthAdjust="spacingAndGlyphs">6</text>
<path d="M1126.2,623.2 L1132.4,619.6 L1128.6,629.9" fill="none" stroke="#000" stroke-width="1.5" stroke-linecap="round" stroke-linejoin="round" shape-rendering="auto"/>
<text x="1122.94" y="664.56" font-size="23.28" fill="#000" font-style="italic" textLength="17.41" lengthAdjust="spacingAndGlyphs">M</text>
<path d="M1141.9,657.4 L1146.4,653.8 L1143.7,664.1" fill="none" stroke="#000" stroke-width="1.5" stroke-linecap="round" stroke-linejoin="round" shape-rendering="auto"/>
<text x="1027.20" y="717.50" font-size="21.65" fill="#000" font-style="italic" textLength="12.45" lengthAdjust="spacingAndGlyphs">E</text>
<path d="M1042.0,710.2 L1047.4,706.6 L1044.2,716.9" fill="none" stroke="#000" stroke-width="1.5" stroke-linecap="round" stroke-linejoin="round" shape-rendering="auto"/>
<text x="1112.70" y="718.56" font-size="23.01" fill="#000" font-style="italic" textLength="10.03" lengthAdjust="spacingAndGlyphs">2</text>
<path d="M1124.9,711.4 L1129.4,707.8 L1126.7,718.1" fill="none" stroke="#000" stroke-width="1.5" stroke-linecap="round" stroke-linejoin="round" shape-rendering="auto"/>
<text x="1146.62" y="709.94" font-size="20.95" fill="#000" font-style="italic" textLength="7.91" lengthAdjust="spacingAndGlyphs">f</text>
<path d="M1157.6,702.5 L1160.4,698.9 L1158.8,709.2" fill="none" stroke="#000" stroke-width="1.5" stroke-linecap="round" stroke-linejoin="round" shape-rendering="auto"/>
<path d="M675.5,266.5 h6.5 M675.5,269.5 h6.5 M675.5,272.5 h6.5" stroke="#000" stroke-width="1"/>
<path d="M571.5,672 h9.5 M571.5,677 h9.5 M571.5,682 h9.5" stroke="#000" stroke-width="2"/>
<line x1="987" y1="178.5" x2="1052" y2="178.5" stroke="#000" stroke-width="1" />
<line x1="1019.5" y1="146" x2="1019.5" y2="211" stroke="#000" stroke-width="1" />
<rect x="1016.5" y="175.5" width="6" height="6" fill="none" stroke="#000"/>
<line x1="64.5" y1="806" x2="64.5" y2="880.5" stroke="#000" stroke-width="1" />
<line x1="64.5" y1="880.5" x2="139" y2="880.5" stroke="#000" stroke-width="1" />
<polygon points="64.5,790 58.5,806.5 71.5,806.5" fill="#fff" stroke="#000"/>
<polygon points="156,880.5 138.5,873.5 138.5,887.5" fill="#fff" stroke="#000"/>
<path d="M59,759 L66.5,768 L74,759 M66.5,768 L66.5,777" fill="none" stroke="#000"/>
<path d="M170,871 L185,890 M185,871 L170,890" fill="none" stroke="#000"/>
</svg>
</div>
<svg class="a" style="left:0;top:0" width="1280" height="1024" font-family="Liberation Sans">
<defs><linearGradient id="hg" x1="0" y1="0" x2="0" y2="1"><stop offset="0" stop-color="#555"/><stop offset="1" stop-color="#eee"/></linearGradient></defs>
<defs><pattern id="gripv" width="2" height="2" patternUnits="userSpaceOnUse"><rect x="0" y="0" width="1" height="1" fill="#1a1a1a"/></pattern></defs>
<polygon points="835,8 835,15 840,11.5" fill="#111"/>
<rect x="1183" y="9" width="12" height="4" fill="#e8e8e8" stroke="#444" stroke-width="0.8"/>
<rect x="1215" y="6" width="8" height="8" fill="none" stroke="#ddd" stroke-width="1.8"/><rect x="1218" y="3" width="8" height="8" fill="none" stroke="#ddd" stroke-width="1.5"/>
<path d="M1252,5 L1262,14 M1262,5 L1252,14" stroke="#444" stroke-width="4"/><path d="M1252,5 L1262,14 M1262,5 L1252,14" stroke="#e8e8e8" stroke-width="2.4"/>
<polygon points="5,32 12,5 18,4 28,27 20,33 17,25 12,26 10,34" fill="#d41c1c"/><polygon points="12,5 18,4 26,25 22,22" fill="#f05050"/><polygon points="13,21 17,21 15,14" fill="#b8b8b8"/><polygon points="5,32 10,34 12,26 8,28" fill="#901010"/>
<polygon points="30,17 37,17 33.5,21" fill="#222"/>
<rect x="3" y="50" width="5" height="15" fill="url(#gripv)"/>
<rect x="672" y="50" width="5" height="15" fill="url(#gripv)"/>
<rect x="3" y="77" width="5" height="15" fill="url(#gripv)"/>
<path d="M11,49 h10 l4,4 v12 h-14 z" fill="#f4f4f4" stroke="#333" stroke-width="1.3"/>
<path d="M33,51 h6 l2,2 h7 v3 h-13 l-3,7 z" fill="#ddd" stroke="#333" stroke-width="1.2"/><path d="M33,63 l4,-7 h13 l-4,7 z" fill="#b8c0cc" stroke="#333" stroke-width="1.2"/>
<rect x="58" y="50" width="14" height="14" fill="#4a5468" stroke="#222"/><rect x="61" y="51" width="8" height="5" fill="#ddd"/><rect x="61" y="59" width="7" height="5" fill="#eee"/>
<rect x="80" y="48" width="2" height="18" fill="#222"/>
<rect x="90" y="49" width="9" height="5" fill="#fff" stroke="#333"/><rect x="86" y="54" width="16" height="7" rx="2" fill="#d8d8d8" stroke="#222" stroke-width="1.3"/><rect x="89" y="60" width="10" height="4" fill="#fff" stroke="#333"/>
<rect x="111" y="49" width="12" height="14" fill="#f4f4f4" stroke="#444"/>
<circle cx="117" cy="57" r="5.5" fill="#e8eef4" stroke="#222" stroke-width="1.6"/><path d="M121,61 l6,6" stroke="#222" stroke-width="3"/>
<rect x="137" y="49" width="9" height="5" fill="#fff" stroke="#333"/><rect x="133" y="54" width="16" height="7" rx="2" fill="#d8d8d8" stroke="#222" stroke-width="1.3"/><rect x="136" y="60" width="10" height="4" fill="#fff" stroke="#333"/>
<path d="M143,63 h6 v-3 l4,4 l-4,4 v-3 h-6z" fill="#1a5ab0"/>
<path d="M157,53 l7,-4 l7,4 v8 l-7,4 l-7,-4z" fill="#ddd" stroke="#444"/><circle cx="165" cy="56" r="5" fill="#e8b040" stroke="#c03020" stroke-width="1.5"/><path d="M162,52 l6,8" stroke="#2a6ad0" stroke-width="1.5"/>
<rect x="179" y="50" width="15" height="13" fill="#e8eef4" stroke="#444"/><rect x="181" y="58" width="11" height="4" fill="#6aa84a"/>
<path d="M185,62 l3,-4 l8,-9 l2,2 l-8,9 z" fill="#8a5a2a" stroke="#5a3010" stroke-width="0.8"/><path d="M181,63 l4,-5 l3,3 z" fill="#d06a20"/>
<rect x="201" y="48" width="2" height="18" fill="#222"/>
<path d="M207,49 L220,62 M221,49 L208,62" stroke="#333" stroke-width="1.8"/><circle cx="209" cy="63" r="2.5" fill="none" stroke="#333" stroke-width="1.5"/><circle cx="219" cy="63" r="2.5" fill="none" stroke="#333" stroke-width="1.5"/>
<rect x="230" y="49" width="9" height="12" fill="#fff" stroke="#333"/><rect x="235" y="53" width="9" height="12" fill="#f2f2f2" stroke="#333"/>
<rect x="254" y="50" width="11" height="13" fill="#b8a890" stroke="#333"/><rect x="259" y="54" width="9" height="11" fill="#f2f2f2" stroke="#333"/>
<rect x="277" y="49" width="13" height="14" fill="#f4f4f4" stroke="#333"/><rect x="279" y="51" width="6" height="5" fill="#2a5aa8"/>
<path d="M283,66 l3,-4 l8,-9 l2,2 l-8,9 z" fill="#8a5a2a" stroke="#5a3010" stroke-width="0.8"/><path d="M279,67 l4,-5 l3,3 z" fill="#d06a20"/>
<rect x="300" y="55" width="12" height="8" fill="#f0f0f0" stroke="#333"/><circle cx="313" cy="63" r="3.5" fill="#eee" stroke="#333"/><path d="M311,48 l-3,5 h4 l-3,5" stroke="#e08a10" stroke-width="1.5" fill="none"/>
<rect x="322" y="48" width="2" height="18" fill="#222"/>
<path d="M329,56 l6,-6 v3 h6 a5,5 0 0 1 0,10 v-3 a2,2 0 0 0 0,-4 h-6 v3 z" fill="#f0f0f0" stroke="#333" stroke-width="1.3"/>
<polygon points="352,56 358,56 355,59" fill="#555"/>
<path d="M381,56 l-6,-6 v3 h-6 a5,5 0 0 0 0,10 v-3 a2,2 0 0 1 0,-4 h6 v3 z" fill="#f4f4f4" stroke="#aaa" stroke-width="1.3"/>
<polygon points="388,56 394,56 391,59" fill="#aaa"/>
<rect x="400" y="48" width="2" height="18" fill="#222"/>
<path d="M408,55 q2,-4 6,-2 l6,2 q4,2 2,6 q-2,4 -8,4 q-6,0 -6,-4 z" fill="#c8c8c8" stroke="#333"/><path d="M420,51 h6 M423,48 v6" stroke="#222" stroke-width="1.5"/>
<circle cx="437" cy="55" r="5.5" fill="#e8eef4" stroke="#222" stroke-width="1.6"/><path d="M441,59 l6,6" stroke="#222" stroke-width="3"/>
<circle cx="459" cy="56" r="6" fill="#e8eef4" stroke="#222" stroke-width="1.6"/><rect x="456" y="53" width="6" height="6" fill="none" stroke="#222"/><polygon points="464,62 467,62 467,65 464,65" fill="#111"/>
<circle cx="483" cy="55" r="5.5" fill="#e8eef4" stroke="#222" stroke-width="1.6"/><path d="M487,59 l6,6" stroke="#222" stroke-width="3"/>
<path d="M480,53 l3,-3 v6z" fill="#222"/>
<rect x="498" y="48" width="2" height="18" fill="#222"/>
<rect x="506" y="49" width="13" height="16" fill="#f8f8f8" stroke="#333" stroke-width="1.2"/><rect x="508" y="51" width="6" height="5" fill="#2a5aa8"/><path d="M509,61 h7" stroke="#333"/>
<rect x="529" y="49" width="14" height="16" fill="#f4f4f4" stroke="#333" stroke-width="1.2"/><rect x="532" y="52" width="3" height="3" fill="#555"/><rect x="537" y="52" width="3" height="3" fill="#555"/><rect x="532" y="57" width="3" height="3" fill="#555"/><rect x="537" y="57" width="3" height="3" fill="#555"/><rect x="534" y="61" width="5" height="2" fill="#555"/>
<rect x="552" y="49" width="10" height="16" fill="#f4f4f4" stroke="#333" stroke-width="1.2"/><rect x="562" y="51" width="3" height="6" fill="#ddd" stroke="#333" stroke-width="0.8"/><path d="M554,53 h6 M554,56 h6 M554,59 h6" stroke="#555" stroke-dasharray="2 1"/>
<path d="M573,61 l8,-10 l9,6 l-8,7 z" fill="#ddd" stroke="#333"/><path d="M574,64 h16" stroke="#333"/>
<path d="M597,50 h9 v4 h3 v5 h-3 v5 h-9 v-5 h-2 v-5 h2z" fill="#fff" stroke="#333" stroke-dasharray="2 1"/><rect x="604" y="57" width="9" height="8" fill="#f4f4f4" stroke="#333"/>
<rect x="621" y="49" width="12" height="16" rx="1" fill="#eee" stroke="#333" stroke-width="1.2"/><rect x="623" y="51" width="8" height="3" fill="#888"/><path d="M623,57 h8 M623,60 h8 M623,63 h8" stroke="#555" stroke-dasharray="2 1"/>
<rect x="641" y="48" width="2" height="18" fill="#222"/>
<rect x="649" y="49" width="16" height="16" fill="#f4f4f4" stroke="#333" stroke-width="1.3"/><text x="657" y="62" font-size="14" font-weight="bold" text-anchor="middle" fill="#222">?</text>
<text x="681" y="64" font-size="19" fill="#333" font-family="Liberation Sans">A</text>
<path d="M691,66 l3,-4 l8,-9 l2,2 l-8,9 z" fill="#8a5a2a" stroke="#5a3010" stroke-width="0.8"/><path d="M687,67 l4,-5 l3,3 z" fill="#d06a20"/>
<polygon points="809.5,55.0 817.5,55.0 813.5,59.5" fill="#000"/>
<rect x="824" y="48" width="2" height="18" fill="#222"/>
<path d="M831,64 h18 M831,60 v8 M849,60 v8" stroke="#222" stroke-width="1.2"/>
<path d="M838,62 l3,-4 l8,-9 l2,2 l-8,9 z" fill="#8a5a2a" stroke="#5a3010" stroke-width="0.8"/><path d="M834,63 l4,-5 l3,3 z" fill="#d06a20"/>
<polygon points="958.5,55.0 966.5,55.0 962.5,59.5" fill="#000"/>
<rect x="973" y="48" width="2" height="18" fill="#222"/>
<rect x="978" y="50" width="13" height="12" fill="#eee" stroke="#555"/><path d="M978,54 h13 M982,50 v12" stroke="#777"/>
<path d="M986,67 l3,-4 l8,-9 l2,2 l-8,9 z" fill="#8a5a2a" stroke="#5a3010" stroke-width="0.8"/><path d="M982,68 l4,-5 l3,3 z" fill="#d06a20"/>
<polygon points="1106.5,55.0 1114.5,55.0 1110.5,59.5" fill="#000"/>
<rect x="1123" y="48" width="2" height="18" fill="#222"/>
<circle cx="1141" cy="52" r="4" fill="#fff" stroke="#444"/><path d="M1138,56 l-7,9" stroke="#444"/>
<path d="M1136,67 l3,-4 l8,-9 l2,2 l-8,9 z" fill="#8a5a2a" stroke="#5a3010" stroke-width="0.8"/><path d="M1132,68 l4,-5 l3,3 z" fill="#d06a20"/>
<polygon points="1256.5,55.0 1264.5,55.0 1260.5,59.5" fill="#000"/>
<polygon points="171.5,82.5 179.5,82.5 175.5,87.0" fill="#000"/>
<polygon points="202.00,84.00 201.87,85.37 199.80,85.99 199.32,86.89 199.95,88.95 198.89,89.82 196.99,88.80 196.01,89.10 195.00,91.00 193.63,90.87 193.01,88.80 192.11,88.32 190.05,88.95 189.18,87.89 190.20,85.99 189.90,85.01 188.00,84.00 188.13,82.63 190.20,82.01 190.68,81.11 190.05,79.05 191.11,78.18 193.01,79.20 193.99,78.90 195.00,77.00 196.37,77.13 196.99,79.20 197.89,79.68 199.95,79.05 200.82,80.11 199.80,82.01 200.10,82.99" fill="#f0f0f0" stroke="#555" stroke-width="1.2" stroke-linejoin="round"/><circle cx="195" cy="84" r="2.6" fill="#e8e8e8" stroke="#555" stroke-width="1.2"/>
<path d="M210,82 l7,-6 l7,6 v9 h-14z" fill="#c8c8c8" stroke="#333"/><rect x="208" y="75" width="18" height="18" fill="none" stroke="#666" stroke-dasharray="1 2"/>
<rect x="233" y="77" width="5" height="15" fill="url(#gripv)"/>
<path d="M242,80 l8,-4 h6 M242,84 l8,-4 h6 M242,88 l8,-4" stroke="#333" fill="none"/><rect x="250" y="82" width="9" height="11" fill="#e8f0f8" stroke="#333"/><rect x="252" y="84" width="5" height="2" fill="#2a5aa8"/>
<polygon points="550.5,82.5 558.5,82.5 554.5,87.0" fill="#000"/>
<path d="M273,77 a5.5,5.5 0 0 1 3,10 v2 h-6 v-2 a5.5,5.5 0 0 1 3,-10z" fill="#f8e8a0" stroke="#555"/><rect x="270.5" y="89" width="5" height="3" fill="#777"/>
<circle cx="289" cy="84" r="4.5" fill="#f8e8a0" stroke="#555"/><path d="M281,84 h3 M294,84 h3 M289,76 v3 M289,89 v3 M283.5,78.5 l2,2 M292.5,87.5 l2,2 M294.5,78.5 l-2,2 M285.5,87.5 l-2,2" stroke="#555"/>
<rect x="300" y="77" width="10" height="10" fill="none" stroke="#aaa"/><circle cx="309" cy="88" r="4" fill="#bbb"/>
<rect x="315" y="83" width="10" height="9" fill="#a8c8e8" stroke="#1a4a8a"/><path d="M322,83 v-4 a4,4 0 0 1 8,0 v2" fill="none" stroke="#1a4a8a" stroke-width="1.8"/>
<path d="M570,82 l8,-5 l8,5 l-8,5 z" fill="#cce0f8" stroke="#1a4a8a"/><path d="M570,86 l8,5 l8,-5 M570,90 l8,5 l8,-5" stroke="#333" fill="none"/><circle cx="580" cy="79" r="3" fill="#ddd" stroke="#444"/>
<path d="M592,84 l8,5 l8,-5 M592,88 l8,5 l8,-5 M592,92 l8,-5" stroke="#333" fill="none"/><path d="M593,78 l4,-2 l4,2 v5" stroke="#333" fill="none"/>
<path d="M614,80 l8,-4 h6 M614,84 l8,-4 M614,88 h5" stroke="#333" fill="none"/><rect x="620" y="83" width="9" height="10" fill="#e8f0f8" stroke="#333"/>
<rect x="635" y="77" width="5" height="15" fill="url(#gripv)"/>
<polygon points="779.5,82.5 787.5,82.5 783.5,87.0" fill="#000"/>
<rect x="794" y="75" width="1" height="20" fill="#222"/><rect x="797" y="75" width="1" height="20" fill="#222"/>
<polygon points="946.5,82.5 954.5,82.5 950.5,87.0" fill="#000"/>
<rect x="960" y="75" width="1" height="20" fill="#222"/><rect x="963" y="75" width="1" height="20" fill="#222"/>
<polygon points="1077.5,82.5 1085.5,82.5 1081.5,87.0" fill="#000"/>
<rect x="1092" y="75" width="1" height="20" fill="#222"/><rect x="1095" y="75" width="1" height="20" fill="#222"/>
<polygon points="1202.5,82.5 1210.5,82.5 1206.5,87.0" fill="#b0b0b0"/>
<polygon points="44,116 52,114 58,118 58,130 44,130" fill="#2a5a98"/><polygon points="44,122 58,127 58,131 44,131" fill="#f0c800"/><circle cx="49" cy="118" r="2" fill="#fff"/>
<rect x="1091" y="122" width="10" height="4" rx="1" fill="#eee" stroke="#3a4a6a"/>
<rect x="1124" y="118" width="10" height="8" rx="1" fill="none" stroke="#3a4a6a" stroke-width="2.5"/><rect x="1124" y="118" width="10" height="8" rx="1" fill="none" stroke="#eee" stroke-width="1"/>
<path d="M1157,118 l10,8 M1167,118 l-10,8" stroke="#4a4a4a" stroke-width="4"/><path d="M1157,118 l10,8 M1167,118 l-10,8" stroke="#fff" stroke-width="2.2"/>
<polygon points="1165,147 1173,147 1169,142" fill="#333"/><polygon points="1165,892 1173,892 1169,897" fill="#333"/>
<text transform="translate(1232,880.5) rotate(-90)" x="0" y="0" font-family="Liberation Serif" font-weight="bold" font-size="38.5" fill="#f4f4f4" textLength="145.5" lengthAdjust="spacingAndGlyphs">Autodesk</text>
<rect x="4" y="103" width="17" height="5" fill="url(#gripv)"/>
<path d="M6,127 L19,113" stroke="#333"/><rect x="4" y="125" width="3" height="3" fill="#fff" stroke="#333" stroke-width="0.8"/><rect x="18" y="111" width="3" height="3" fill="#fff" stroke="#333" stroke-width="0.8"/>
<path d="M6,149 L19,135" stroke="#333"/><path d="M4,150 l5,-1 l-4,-4z M21,134 l-5,1 l4,4z" fill="#333"/><rect x="11" y="140" width="3" height="3" fill="#fff" stroke="#333" stroke-width="0.8"/>
<path d="M5,168 h9 a4,4 0 0 0 0,-8 h-6" fill="none" stroke="#333"/><rect x="4" y="166" width="3" height="3" fill="#fff" stroke="#333" stroke-width="0.8"/><rect x="11" y="166" width="3" height="3" fill="#fff" stroke="#333" stroke-width="0.8"/>
<polygon points="12,178 20,184 17,192 7,192 4,184" fill="#e8e8ec" stroke="#333"/>
<rect x="5" y="202" width="14" height="10" fill="#e4e6ec" stroke="#333"/><rect x="3.5" y="210.5" width="3" height="3" fill="#fff" stroke="#333" stroke-width="0.8"/><rect x="17.5" y="200.5" width="3" height="3" fill="#fff" stroke="#333" stroke-width="0.8"/>
<path d="M5,236 q2,-10 13,-12" fill="none" stroke="#333"/><rect x="4" y="234" width="3" height="3" fill="#fff" stroke="#333" stroke-width="0.8"/><rect x="17" y="222" width="3" height="3" fill="#fff" stroke="#333" stroke-width="0.8"/>
<circle cx="12" cy="251" r="7" fill="#eee" stroke="#333"/><path d="M12,251 l5,-5" stroke="#333"/><rect x="10.5" y="249.5" width="3" height="3" fill="#fff" stroke="#333" stroke-width="0.8"/>
<path d="M8,266 a4,4 0 0 1 8,0 a4,4 0 0 1 3,7 a4,4 0 0 1 -3,7 a4,4 0 0 1 -8,0 a4,4 0 0 1 -3,-7 a4,4 0 0 1 3,-7z" fill="#e4e4ea" stroke="#333" stroke-width="1.2" transform="translate(12,273) scale(0.78) translate(-12,-273)"/>
<path d="M4,302 q4,-14 8,-6 q4,8 8,-8" fill="none" stroke="#333" stroke-width="1.2"/>
<ellipse cx="12" cy="317" rx="8" ry="5" fill="#e8e8e8" stroke="#333"/><rect x="2.5" y="315.5" width="3" height="3" fill="#fff" stroke="#333" stroke-width="0.8"/><rect x="18.5" y="315.5" width="3" height="3" fill="#fff" stroke="#333" stroke-width="0.8"/><rect x="10.5" y="310.5" width="3" height="3" fill="#fff" stroke="#333" stroke-width="0.8"/>
<path d="M5,340 a7,5 0 1 1 8,2" fill="none" stroke="#333"/>
<rect x="5" y="355" width="10" height="8" fill="#eee" stroke="#333"/><rect x="10" y="354" width="9" height="12" fill="#f4f4f4" stroke="#333"/><circle cx="13" cy="367" r="3" fill="#eee" stroke="#333"/>
<rect x="5" y="379" width="10" height="8" fill="#eee" stroke="#333"/><circle cx="16" cy="386" r="3.5" fill="#eee" stroke="#333"/>
<rect x="10" y="404" width="3" height="3" fill="none" stroke="#333" stroke-width="0.8"/>
<rect x="7" y="423" width="10" height="11" fill="#e4e4e4"/><path d="M8,426 l3,-3 M8,430 l7,-7 M8,434 l9,-9 M12,434 l5,-5" stroke="#777" stroke-width="0.8"/><path d="M4,424 h16 M4,433 h16 M7,420 v17 M17,420 v17" stroke="#333" stroke-width="1"/><path d="M11,436 l8,-8" stroke="#333"/>
<rect x="7" y="445" width="10" height="11" fill="url(#hg)"/><path d="M4,446 h16 M4,455 h16 M7,442 v17 M17,442 v17" stroke="#333" stroke-width="1"/><path d="M11,458 l8,-8" stroke="#333"/>
<path d="M5,466 h9 l5,5 v7 h-14z" fill="#eee" stroke="#333"/><circle cx="11" cy="472" r="3" fill="none" stroke="#333"/>
<rect x="4" y="486" width="16" height="15" fill="#f4f4f4" stroke="#444"/><rect x="4" y="486" width="16" height="3" fill="#999"/><path d="M4,493 h16 M4,497 h16 M9,489 v12 M14,489 v12" stroke="#aaa"/>
<text x="12" y="523" font-size="18" text-anchor="middle" fill="#222" font-family="Liberation Sans">A</text>
<rect x="1256" y="104" width="17" height="5" fill="url(#gripv)"/>
<rect x="1256" y="486" width="17" height="5" fill="url(#gripv)"/>
<path d="M1257,127 h16" stroke="#333"/><path d="M1260,124 l10,-11 l3,3 l-10,11z" fill="#d8c8a0" stroke="#555" stroke-width="0.7"/><circle cx="1261" cy="124" r="3" fill="#c84010"/>
<circle cx="1260" cy="137" r="3" fill="none" stroke="#333"/><circle cx="1265" cy="146" r="4" fill="#bcd4f4" stroke="#1a6ad8" stroke-width="1.3"/><circle cx="1269" cy="148" r="4" fill="none" stroke="#1a6ad8" stroke-width="1.3"/><path d="M1264,135 h4 v4" stroke="#333" fill="none"/>
<polygon points="1263,170 1263,157 1256,170" fill="#eee" stroke="#333"/><polygon points="1266,170 1266,157 1273,170" fill="#c8dcf4" stroke="#1a6ad8"/><path d="M1264.5,155 v17" stroke="#333"/>
<path d="M1257,191 v-4 q0,-4 4,-4 q0,-4 4,-4 q4,0 4,4 q4,0 4,4 v4z" fill="#ddd" stroke="#333"/><path d="M1257,193 h16" stroke="#1a6ad8" stroke-width="2"/>
<rect x="1257" y="200" width="6" height="6" fill="none" stroke="#1a6ad8" stroke-width="1.3"/><rect x="1266" y="200" width="6" height="6" fill="none" stroke="#1a6ad8" stroke-width="1.3"/><rect x="1257" y="209" width="6" height="6" fill="none" stroke="#1a6ad8" stroke-width="1.3"/><rect x="1266" y="209" width="6" height="6" fill="none" stroke="#1a6ad8" stroke-width="1.3"/>
<path d="M1264,221 v16 M1256,229 h16" stroke="#222" stroke-width="1.5"/><rect x="1262" y="227" width="4" height="4" fill="#fff" stroke="#222"/>
<path d="M1269,246 a6.5,6.5 0 1 1 -6,-1" fill="none" stroke="#444" stroke-width="1.5"/>
<rect x="1257" y="268" width="9" height="8" fill="#f0f0f0" stroke="#333"/><path d="M1260,265 v-4 h12 v13 h-5" fill="none" stroke="#1a6ad8" stroke-width="1.5"/>
<path d="M1257,287 h9 l5,14 h-14z" fill="#eee" stroke="#333"/><path d="M1259,296 h5" stroke="#222" stroke-width="1.2"/><path d="M1266,287 v14" stroke="#1a6ad8" stroke-width="1.5"/>
<path d="M1256,320 h3 M1261,320 h2" stroke="#222"/><path d="M1264,323 l7,-10" stroke="#1a6ad8" stroke-width="1.5"/><path d="M1267,318 h3" stroke="#222"/>
<path d="M1256,340 h4 M1262,340 h2 M1266,340 h2" stroke="#222"/><path d="M1268,345 l4,-10" stroke="#1a6ad8" stroke-width="1.5"/>
<path d="M1257,367 v-7 h15 v7z" fill="#eee" stroke="#333"/><rect x="1267" y="357" width="4" height="3" fill="#1a6ad8"/>
<path d="M1257,389 v-8 h15 v8z" fill="#eee" stroke="#333"/><rect x="1258" y="379" width="3" height="3" fill="#1a6ad8"/><rect x="1268" y="379" width="3" height="3" fill="#1a6ad8"/>
<path d="M1257,405 h15" stroke="#1a6ad8" stroke-width="1.3"/><path d="M1262,401 l3,4 l-3,4z M1268,401 l-3,4 l3,4z" fill="#1a6ad8"/>
<path d="M1257,435 v-8 l6,-6 h9 v14z" fill="#eee" stroke="#333"/><path d="M1257,427 l6,-6" stroke="#1a6ad8" stroke-width="1.5"/>
<path d="M1257,457 v-5 a8,8 0 0 1 8,-8 h7 v13z" fill="#eee" stroke="#333"/><path d="M1257,452 a8,8 0 0 1 8,-8" fill="none" stroke="#1a6ad8" stroke-width="1.5"/>
<path d="M1257,468 h10 l4,-3 v8 l-4,4 h-10z" fill="none" stroke="#1a6ad8" stroke-width="1.3"/><path d="M1257,468 l4,-3 h10" stroke="#1a6ad8" fill="none"/><rect x="1261" y="471" width="5" height="5" fill="none" stroke="#1a6ad8"/>
<rect x="1257" y="497" width="10" height="7" fill="#f4f4f4" stroke="#333"/><rect x="1260" y="500" width="10" height="7" fill="#ddd" stroke="#333"/><rect x="1263" y="504" width="10" height="7" fill="#f4f4f4" stroke="#333"/>
<rect x="1257" y="519" width="10" height="7" fill="#f4f4f4" stroke="#333"/><rect x="1260" y="522" width="10" height="7" fill="#eee" stroke="#333"/><rect x="1263" y="526" width="10" height="7" fill="#f4f4f4" stroke="#333"/>
<rect x="1257" y="541" width="10" height="7" fill="#f4f4f4" stroke="#333"/><rect x="1260" y="544" width="10" height="7" fill="#aaa" stroke="#333"/><rect x="1263" y="548" width="10" height="7" fill="#f4f4f4" stroke="#333"/>
<rect x="1257" y="563" width="10" height="7" fill="#f4f4f4" stroke="#333"/><rect x="1260" y="566" width="10" height="7" fill="#999" stroke="#333"/><rect x="1263" y="570" width="10" height="7" fill="#f4f4f4" stroke="#333"/>
<rect x="3" y="906" width="10" height="5" fill="url(#gripv)"/>
<polygon points="1267,915 1275,915 1271,911" fill="#333"/><polygon points="1267,929 1275,929 1271,933" fill="#333"/>
<polygon points="1207,948 1207,956 1203,952" fill="#333"/><polygon points="1253,948 1253,956 1257,952" fill="#333"/>
<g transform="translate(-2,0)"><path d="M192,969 h12 M192,973 h12 M192,977 h12" stroke="#333" stroke-dasharray="1 2"/><path d="M203,968 v10 M190,980 h14" stroke="#333"/><rect x="211" y="967" width="14" height="14" fill="#fff"/><path d="M211,967 h14 M211,970 h14 M211,973 h14 M211,976 h14 M211,979 h14 M211,981 h14 M211,967 v14 M214,967 v14 M217,967 v14 M220,967 v14 M223,967 v14 M225,967 v14" stroke="#222" stroke-width="1"/><path d="M233,966 v15 h14" fill="none" stroke="#333"/><path d="M236,975 v3 h3" fill="none" stroke="#333"/><circle cx="260" cy="975" r="5" fill="none" stroke="#333" stroke-width="1.3"/><path d="M258,977 l8,-8 M256,977 h10" stroke="#333"/><rect x="280" y="968" width="12" height="13" fill="#fff" stroke="#444"/><circle cx="278" cy="966" r="2" fill="#e06020"/><path d="M299,980 l10,-10 M299,980 h12" stroke="#333" stroke-width="1.2"/><path d="M303,976 a5,5 0 0 1 2,4" fill="none" stroke="#333"/><path d="M320,966 v15 h14" fill="none" stroke="#333"/><path d="M322,979 l10,-10" stroke="#333" stroke-dasharray="2 1"/><path d="M332,966 l-2,4 h3 l-2,4" stroke="#e09a10" fill="none" stroke-width="1.3"/><path d="M342,973 h8 M346,969 v8" stroke="#111" stroke-width="1.5"/><rect x="350" y="974" width="7" height="4" fill="#fff" stroke="#111"/><path d="M364,973 h13 M370.5,966 v14" stroke="#000" stroke-width="2.5"/><rect x="388" y="967" width="10" height="13" fill="#fff" stroke="#222"/><path d="M390,970 h6 M390,973 h6 M390,976 h6" stroke="#222" stroke-dasharray="2 1"/></g>
<rect x="783" y="966" width="12" height="12" fill="#fff" stroke="#222"/><path d="M786,975 l4,-6 v6z" fill="none" stroke="#222"/><path d="M782,980 h14" stroke="#222" stroke-width="1.5"/>
<rect x="804" y="966" width="7" height="8" fill="#fff" stroke="#222"/><rect x="812" y="966" width="7" height="8" fill="#fff" stroke="#222"/><path d="M804,979 h15" stroke="#222" stroke-width="1.8"/>
<path d="M839,974 q2,-4 6,-2 l5,1 q4,2 2,6 q-2,3 -7,3 q-5,0 -6,-4z" fill="#ddd" stroke="#333"/><path d="M847,968 h6 M850,965 v6" stroke="#222" stroke-width="1.3"/>
<circle cx="866" cy="972" r="5.5" fill="#e8f0f8" stroke="#222" stroke-width="1.5"/><path d="M870,976 l5,5" stroke="#222" stroke-width="2.5"/>
<circle cx="891" cy="973" r="7" fill="#ddd" stroke="#444"/><circle cx="891" cy="973" r="3.5" fill="#fff" stroke="#444"/><path d="M886,968 l10,10 M896,968 l-10,10" stroke="#444"/>
<rect x="905" y="966" width="4" height="3" fill="#fff" stroke="#222"/><rect x="910" y="966" width="4" height="3" fill="#fff" stroke="#222"/><rect x="915" y="966" width="4" height="3" fill="#fff" stroke="#222"/><rect x="906" y="971" width="12" height="10" fill="#fff" stroke="#222"/><polygon points="910,973 910,979 915,976" fill="#222"/>
<path d="M947,966 l-5,12 l5,-4 l5,4z" fill="#fff" stroke="#222"/>
<polygon points="974,970 982,970 978,975" fill="#111"/>
<path d="M997,966 l-5,12 l5,-4 l5,4z" fill="#fff" stroke="#222"/><circle cx="1002" cy="976" r="2.5" fill="#f0a020"/>
<path d="M1019,966 l-5,12 l5,-4 l5,4z" fill="#ccc" stroke="#999"/>
<polygon points="1053.50,973.00 1053.38,974.27 1051.43,974.84 1050.99,975.67 1051.60,977.60 1050.61,978.40 1048.84,977.43 1047.94,977.71 1047.00,979.50 1045.73,979.38 1045.16,977.43 1044.33,976.99 1042.40,977.60 1041.60,976.61 1042.57,974.84 1042.29,973.94 1040.50,973.00 1040.62,971.73 1042.57,971.16 1043.01,970.33 1042.40,968.40 1043.39,967.60 1045.16,968.57 1046.06,968.29 1047.00,966.50 1048.27,966.62 1048.84,968.57 1049.67,969.01 1051.60,968.40 1052.40,969.39 1051.43,971.16 1051.71,972.06" fill="#f0f0f0" stroke="#555" stroke-width="1.2" stroke-linejoin="round"/><circle cx="1047" cy="973" r="2.6" fill="#e8e8e8" stroke="#555" stroke-width="1.2"/>
<polygon points="1179,970 1187,970 1183,975" fill="#111"/>
<rect x="1196" y="973" width="10" height="8" fill="#fff" stroke="#222"/><path d="M1202,973 v-4 a4,4 0 0 1 8,0 v2" fill="none" stroke="#222" stroke-width="1.5"/>
<rect x="1219" y="967" width="14" height="14" fill="#4a78b8"/><rect x="1219" y="974" width="10" height="6" fill="#f0c800"/><path d="M1224,977 l3,3 l6,-6" stroke="#2aa02a" stroke-width="2" fill="none"/>
<polygon points="1244,971 1251,971 1247.5,975" fill="#111"/>
<rect x="1261" y="967" width="14" height="14" fill="#fff" stroke="#333"/><rect x="1261" y="967" width="14" height="3" fill="#888"/>
<defs><radialGradient id="orb" cx="0.5" cy="0.35" r="0.65"><stop offset="0" stop-color="#7ac0f0"/><stop offset="0.5" stop-color="#2a70b8"/><stop offset="0.85" stop-color="#0f3a78"/><stop offset="1" stop-color="#3aa8e8"/></radialGradient></defs><circle cx="27" cy="1004" r="18" fill="url(#orb)" stroke="#0a1a3a" stroke-width="1"/><ellipse cx="27" cy="995" rx="13" ry="8" fill="#c8e8ff" opacity="0.35"/>
<path d="M14,1001 q6,-4 12,-1 l-2,7 q-6,-3 -12,1z" fill="#f05a20"/><path d="M28,1000 q6,2 12,-1 l-2,8 q-6,3 -12,1z" fill="#80c030"/><path d="M12,1009 q6,-4 12,-1 l-2,7 q-6,-3 -12,1z" fill="#2a9ae8"/><path d="M26,1009 q6,2 12,-1 l-2,8 q-6,3 -12,1z" fill="#f8c020"/>
<circle cx="89" cy="1004" r="11" fill="#2a8ae8"/><circle cx="89" cy="1004" r="6" fill="#fff"/><path d="M80,1004 h18" stroke="#2a8ae8" stroke-width="3"/><ellipse cx="89" cy="1003" rx="17" ry="7" transform="rotate(-35 89 1003)" fill="none" stroke="#f0b020" stroke-width="2.5"/>
<path d="M133,996 h10 l3,3 h17 v17 h-30z" fill="#e8c050"/><rect x="136" y="999" width="24" height="14" fill="#fff"/><path d="M133,1004 h30 v14 h-30z" fill="#f8e090"/><rect x="140" y="1010" width="16" height="6" fill="#8ac0e0"/>
<rect x="199" y="995" width="20" height="20" rx="2" fill="#8ab8e0"/><circle cx="209" cy="1005" r="8" fill="#f07010"/><polygon points="206,1000 206,1010 214,1005" fill="#fff"/>
<rect x="259" y="993" width="26" height="26" fill="#fff" stroke="#8aa0c0"/><rect x="258" y="996" width="16" height="16" fill="#1a4a9a"/><text x="266" y="1010" font-size="13" font-weight="bold" fill="#fff" text-anchor="middle" font-family="Liberation Sans">W</text><path d="M276,1000 h7 M276,1004 h7 M276,1008 h7 M262,1014 h20" stroke="#2a5ab0" stroke-width="1.5"/>
<path d="M320,998 l10,-4 l14,4 v12 l-14,6 l-10,-6z" fill="#e8e8e0" stroke="#888"/><text x="326" y="1010" font-size="11" fill="#2a5ab0" font-family="Liberation Sans">λ</text><text x="336" y="1010" font-size="11" fill="#2a8a2a" font-family="Liberation Sans">/</text>
<rect x="382" y="994" width="34" height="26" fill="#f4f4f4"/><polygon points="384,1017 392,992 398,992 408,1014 402,1017 398,1008 392,1008 390,1017" fill="#d01818"/><text x="404" y="1003" font-size="8" font-weight="bold" fill="#c01010" font-family="Liberation Sans">20</text><text x="404" y="1011" font-size="8" font-weight="bold" fill="#c01010" font-family="Liberation Sans">10</text>
<polygon points="1096,1007 1104,1007 1100,1003" fill="#fff"/>
<path d="M1119,997 v16" stroke="#fff" stroke-width="1.5"/><path d="M1120,998 h6 l2,2 h5 l-2,4 l2,3 h-7 l-2,-2 h-4z" fill="#fff"/>
<rect x="1146" y="999" width="11" height="9" fill="#4a5a70" stroke="#fff"/><rect x="1143" y="997" width="4" height="6" fill="#fff"/><path d="M1145,1003 v8 h4 M1150,1010 h6" stroke="#fff"/>
<path d="M1167,1001 h4 l5,-4 v14 l-5,-4 h-4z" fill="#ddd" stroke="#fff"/><path d="M1179,1000 a6,6 0 0 1 0,8 M1182,998 a9,9 0 0 1 0,12" fill="none" stroke="#fff" stroke-width="1.2"/>
<path d="M50,4 h10 l4,4 v12 h-14 z" fill="#f4f4f4" stroke="#333" stroke-width="1.3"/>
<path d="M72,6 h6 l2,2 h7 v3 h-13 l-3,7 z" fill="#ddd" stroke="#333" stroke-width="1.2"/><path d="M72,18 l4,-7 h13 l-4,7 z" fill="#b8c0cc" stroke="#333" stroke-width="1.2"/>
<rect x="96" y="5" width="14" height="14" fill="#4a5468" stroke="#222"/><rect x="99" y="6" width="8" height="5" fill="#ddd"/><rect x="99" y="14" width="7" height="5" fill="#eee"/>
<path d="M118,11 l6,-6 v3 h6 a5,5 0 0 1 0,10 v-3 a2,2 0 0 0 0,-4 h-6 v3 z" fill="#f0f0f0" stroke="#333" stroke-width="1.3"/>
<polygon points="138,11 144,11 141,14" fill="#555"/>
<path d="M166,11 l-6,-6 v3 h-6 a5,5 0 0 0 0,10 v-3 a2,2 0 0 1 0,-4 h6 v3 z" fill="#f4f4f4" stroke="#999" stroke-width="1.3"/>
<polygon points="170,11 176,11 173,14" fill="#999"/>
<rect x="186" y="4" width="9" height="5" fill="#fff" stroke="#333"/><rect x="182" y="9" width="16" height="7" rx="2" fill="#d8d8d8" stroke="#222" stroke-width="1.3"/><rect x="185" y="15" width="10" height="4" fill="#fff" stroke="#333"/>
<rect x="204" y="7" width="8" height="2" fill="#111"/><polygon points="204,11 212,11 208,15" fill="#111"/>
<rect x="1029" y="5" width="5" height="12" rx="1" fill="#ddd" stroke="#222"/><rect x="1037" y="5" width="5" height="12" rx="1" fill="#ddd" stroke="#222"/><rect x="1033" y="7" width="5" height="4" fill="#222"/>
<polygon points="1047,11 1053,11 1050,14" fill="#444"/>
<circle cx="1064" cy="8" r="4.5" fill="#eee" stroke="#222" stroke-width="1.5"/><path d="M1067,11 l7,7" stroke="#222" stroke-width="3"/><path d="M1067,11 l7,7" stroke="#ddd" stroke-width="1"/>
<path d="M1082,6 a8,8 0 0 0 10,10 z" fill="#eee" stroke="#222" stroke-width="1.3"/><path d="M1085,19 h10 l-3,-5z" fill="#eee" stroke="#222"/><path d="M1089,10 l5,-5" stroke="#222"/>
<polygon points="1112,3 1114.5,9 1121,9 1116,13 1118,19 1112,15 1106,19 1108,13 1103,9 1109.5,9" fill="#f4f4f4" stroke="#222" stroke-width="1.3"/>
<circle cx="1136" cy="11" r="7.5" fill="#f4f4f4" stroke="#222" stroke-width="1.5"/><text x="1136" y="16" font-size="12" font-weight="bold" text-anchor="middle" fill="#222" font-family="Liberation Sans">?</text>
<polygon points="1149,11 1155,11 1152,14" fill="#444"/>
</svg>
</body></html>
